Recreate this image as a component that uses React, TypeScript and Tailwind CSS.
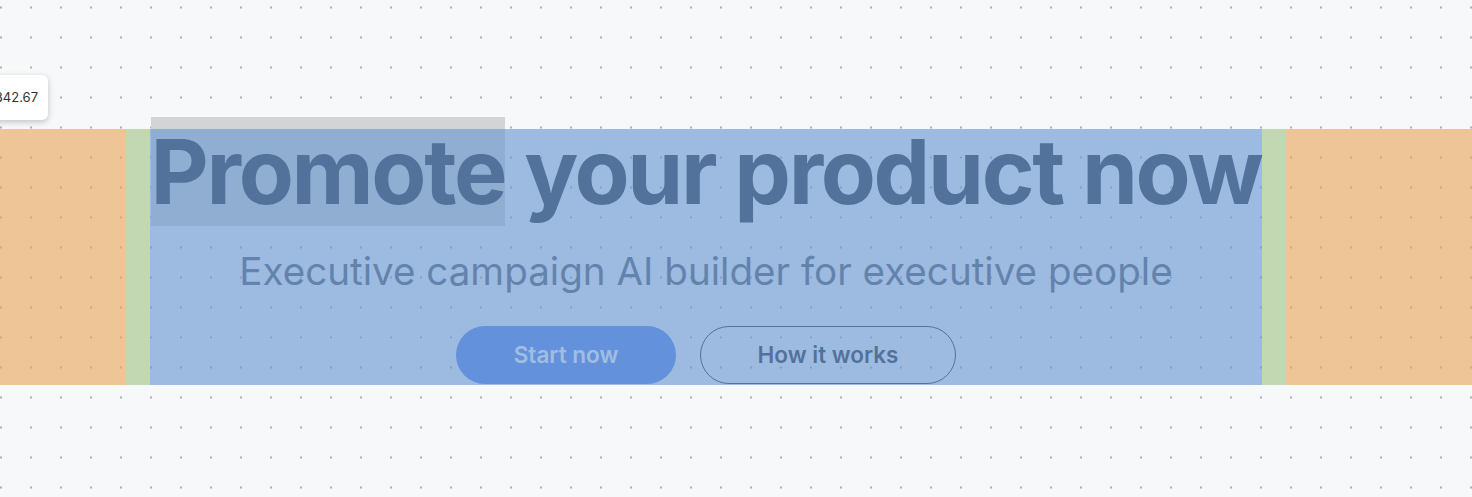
import React from "react";

const font = { fontFamily: "Inter, 'Noto Sans', sans-serif" };

// box-model overlay, as the inspector draws it over the hovered element
const InspectOverlay = () => (
  <div className="pointer-events-none absolute inset-0">
    <div className="absolute top-0 bottom-0 left-[-126px] w-[126px] bg-[rgba(231,167,93,0.63)]" />
    <div className="absolute top-0 bottom-0 right-[-186px] w-[186px] bg-[rgba(231,167,93,0.63)]" />
    <div className="absolute top-0 bottom-0 left-0 w-[24px] bg-[rgba(151,190,119,0.55)]" />
    <div className="absolute top-0 bottom-0 right-0 w-[24px] bg-[rgba(151,190,119,0.55)]" />
    <div className="absolute top-0 bottom-0 left-[24px] right-[24px] bg-[rgba(104,151,209,0.63)]" />
  </div>
);

export default function App() {
  return (
    <div
      style={font}
      className="relative h-[497px] w-full overflow-hidden bg-[#f7f8fa] bg-[radial-gradient(circle,#b0b0b0_0.9px,transparent_1.3px)] bg-[length:30px_30px] bg-[position:-14px_-7.5px]"
    >
      <section className="relative mt-[129px] ml-[126px] h-[256px] w-[1160px] px-[24px]">
        <div className="flex flex-col items-center">
          <h1 className="whitespace-nowrap text-[90px] leading-[85px] font-bold tracking-[-0.026em] text-[#2c353f]">
            <span className="bg-[#d4d4d4]">Promote</span> your product now
          </h1>
          <p className="mt-[33px] whitespace-nowrap text-[38.6px] leading-[48px] font-normal text-[#5a6370]">
            Executive campaign AI builder for executive people
          </p>
          <div className="mt-[31px] flex gap-[24px]">
            <button className="h-[58px] w-[220px] rounded-full bg-[#5a87ef] text-[22.5px] font-semibold text-white">
              Start now
            </button>
            <button className="h-[58px] w-[256px] rounded-full border border-[#2c353f] text-[22.5px] font-semibold text-[#2c353f]">
              How it works
            </button>
          </div>
        </div>
        <InspectOverlay />
      </section>

      <div className="absolute top-[75px] left-[-22px] flex h-[45px] w-[70px] items-center justify-end rounded-md bg-white pr-[10px] text-[13px] text-[#333] shadow-[0_2px_6px_rgba(0,0,0,0.22)]">
        842.67
      </div>
    </div>
  );
}
